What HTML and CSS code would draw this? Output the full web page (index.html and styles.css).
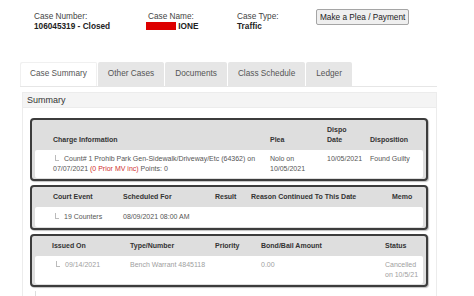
FILE: index.html
```html
<!DOCTYPE html>
<html lang="en">
<head>
  <meta charset="UTF-8">
  <title>Case Summary</title>
  <link rel="stylesheet" href="styles.css">
</head>
<body>
  <div class="case-header">
    <div class="field field-number">
      <div class="label">Case Number:</div>
      <div class="value">106045319 - Closed</div>
    </div>
    <div class="field field-name">
      <div class="label">Case Name:</div>
      <div class="value"><span class="redacted"></span> IONE</div>
    </div>
    <div class="field field-type">
      <div class="label">Case Type:</div>
      <div class="value">Traffic</div>
    </div>
    <button class="plea-btn">Make a Plea / Payment</button>
  </div>

  <div class="main">
    <ul class="tabs">
      <li class="tab active">Case Summary</li>
      <li class="tab">Other Cases</li>
      <li class="tab">Documents</li>
      <li class="tab">Class Schedule</li>
      <li class="tab">Ledger</li>
    </ul>

    <div class="panel">
      <div class="panel-heading">Summary</div>
      <div class="panel-body">

        <!-- charges -->
        <div class="box">
          <div class="row head cols-charge">
            <div>Charge Information</div>
            <div>Plea</div>
            <div>Dispo<br>Date</div>
            <div>Disposition</div>
          </div>
          <div class="row data cols-charge">
            <div><span class="tree"></span>Count# 1 Prohib Park Gen-Sidewalk/Driveway/Etc (64362) on<br>07/07/2021 <span class="prior">(0 Prior MV inc)</span> Points: 0</div>
            <div>Nolo on<br>10/05/2021</div>
            <div>10/05/2021</div>
            <div>Found Guilty</div>
          </div>
        </div>

        <!-- court events -->
        <div class="box">
          <div class="row head cols-court">
            <div>Court Event</div>
            <div>Scheduled For</div>
            <div>Result</div>
            <div>Reason Continued To This Date</div>
            <div>Memo</div>
          </div>
          <div class="row data single cols-court">
            <div><span class="tree"></span>19 Counters</div>
            <div>08/09/2021 08:00 AM</div>
            <div></div>
            <div></div>
            <div></div>
          </div>
        </div>

        <!-- warrants -->
        <div class="box">
          <div class="row head cols-warrant">
            <div>Issued On</div>
            <div>Type/Number</div>
            <div>Priority</div>
            <div>Bond/Bail Amount</div>
            <div>Status</div>
          </div>
          <div class="row data muted cols-warrant">
            <div><span class="tree tree-warrant"></span>09/14/2021</div>
            <div>Bench Warrant 4845118</div>
            <div></div>
            <div>0.00</div>
            <div>Cancelled<br>on 10/5/21</div>
          </div>
        </div>

        <div class="more"></div>
      </div>
    </div>
  </div>
</body>
</html>
```

FILE: styles.css
```css
body {
  margin: 0;
  font-family: "Liberation Sans", Arial, sans-serif;
  font-size: 8.25px;
  color: #333;
  background-color: #fff;
}

/* case header */
.case-header {
  display: flex;
  align-items: flex-start;
  padding: 9px 0 0 34px;
  height: 53px;
}

.field {
  margin-top: 3px;
  line-height: 10px;
}

.field-number {
  width: 114px;
}

.field-name {
  width: 89px;
}

.field-type {
  width: 79px;
}

.label {
  color: #444;
}

.value {
  font-weight: bold;
  color: #222;
}

.redacted {
  display: inline-block;
  width: 30px;
  height: 8px;
  margin-left: -2px;
  vertical-align: -1px;
  background-color: #dd0000;
}

.plea-btn {
  font-family: inherit;
  font-size: 8.25px;
  color: #222;
  height: 16px;
  padding: 0 3px;
  background-color: #efefef;
  border: 1px solid #a5a5a5;
  border-radius: 2px;
}

/* tabs */
.main {
  margin-left: 20px;
  width: 417px;
}

.tabs {
  display: flex;
  gap: 1px;
  list-style: none;
  margin: 0;
  padding: 0;
  border-bottom: 1px solid #e6e6e6;
}

.tab {
  height: 24px;
  line-height: 24px;
  padding: 0 10px;
  color: #555;
  background-color: #e6e6e6;
  border-radius: 2px 2px 0 0;
}

.tab.active {
  background-color: #fff;
  box-shadow: inset 1px 1px 0 #f0f0f0, inset -1px 0 0 #f0f0f0;
}

/* panel */
.panel {
  margin: 5px 0 0 2px;
  border: 1px solid #ececec;
  border-bottom: none;
}

.panel-heading {
  height: 14px;
  line-height: 14px;
  padding: 0 4px;
  font-size: 9px;
  color: #333;
  background-color: #f4f4f4;
  border-bottom: 1px solid #ececec;
}

.panel-body {
  padding: 10px 8px 0 7px;
  font-size: 7px;
}

/* result boxes */
.box {
  background-color: #dedede;
  border: 2px solid #3c3c3c;
  border-radius: 4px;
  padding: 0 3px 1px;
  margin-bottom: 4px;
  box-shadow: 1px 1px 1px rgba(0, 0, 0, 0.25);
}

.row {
  display: grid;
  padding-left: 18px;
  line-height: 10px;
}

.head {
  align-items: end;
  padding-top: 5px;
  padding-bottom: 5px;
  font-weight: bold;
  color: #333;
}

.data {
  padding-top: 4px;
  padding-bottom: 4px;
  color: #555;
  background-color: #fff;
  border-radius: 2px;
}

.data.single {
  padding-top: 5px;
  padding-bottom: 5px;
}

.data.muted {
  color: #a0a0a0;
}

.cols-charge {
  grid-template-columns: 217px 57px 43px auto;
}

.cols-court {
  grid-template-columns: 70px 92px 36px 141px auto;
}

.cols-warrant {
  padding-left: 17px;
  grid-template-columns: 78px 85px 46px 124px auto;
}

.tree {
  display: inline-block;
  width: 3px;
  height: 5px;
  margin: 0 5px 0 2px;
  border-left: 1px solid #bbb;
  border-bottom: 1px solid #bbb;
}

.tree-warrant {
  margin-left: 4px;
}

.prior {
  color: #d03030;
}

.more {
  width: 0;
  height: 10px;
  margin: 1px 0 0 5px;
  border-left: 1px solid #ddd;
}
```
